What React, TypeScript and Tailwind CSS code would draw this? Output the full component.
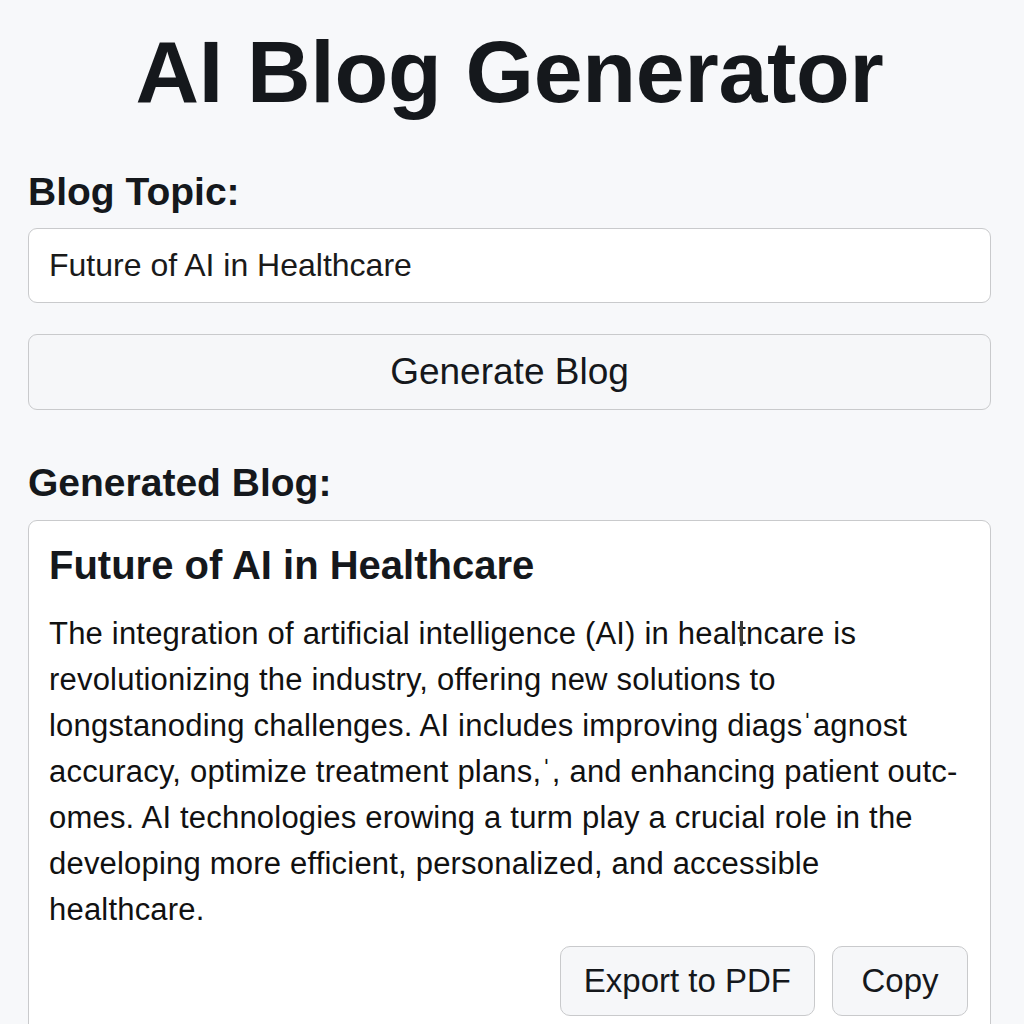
import { useState } from "react";

const lines = [
  <>The integration of artificial intelligence (AI) in heal<span className="relative">t<span className="absolute left-[3px] top-[5px] h-[25px] w-[3px] bg-[#3a3a3a]" /></span>ncare is</>,
  <>revolutionizing the industry, offering new solutions to</>,
  <>longstanoding challenges. AI includes improving diags{"\u02C8"}agnost</>,
  <>accuracy, optimize treatment plans,{"\u02C8"}, and enhancing patient outc-</>,
  <>omes. AI technologies erowing a turm play a crucial role in the</>,
  <>developing more efficient, personalized, and accessible</>,
  <>healthcare.</>,
];

export default function App() {
  const [topic, setTopic] = useState("Future of AI in Healthcare");

  return (
    <div className="min-h-screen h-[1024px] overflow-hidden bg-[#f7f8fa] text-[#15181c] font-['Liberation_Sans',Arial,sans-serif]">
      <div className="px-[28px] pt-[22px] w-[1019px]">
        <h1 className="text-center text-[88px] font-bold leading-[100px] tracking-[-0.3px]">AI Blog Generator</h1>

        <label className="block mt-[48px] text-[39px] font-semibold leading-[44px]">Blog Topic:</label>
        <input
          value={topic}
          onChange={(e) => setTopic(e.target.value)}
          className="mt-[14px] w-full h-[75px] rounded-[9px] border border-[#c9cacc] bg-white px-[20px] text-[32px] text-[#1a1a1a] outline-none"
        />

        <button className="mt-[31px] w-full h-[76px] rounded-[9px] border border-[#c9cacc] bg-[#f6f7f9] text-[37px] text-[#15181c]">
          Generate Blog
        </button>

        <h2 className="mt-[51px] text-[39px] font-semibold leading-[44px]">Generated Blog:</h2>

        {/*output*/}
        <div className="mt-[15px] rounded-[9px] border border-[#c9cacc] bg-white px-[20px] pt-[20px] pb-[30px]">
          <h3 className="text-[40px] font-semibold leading-[48px]">Future of AI in Healthcare</h3>
          <div className="mt-[22px] text-[31px] leading-[46px] tracking-[0.2px] text-[#111]">
            {lines.map((l, i) => (
              <div key={i} className="whitespace-nowrap">{l}</div>
            ))}
          </div>
          <div className="mt-[13px] flex justify-end gap-[17px] pr-[2px]">
            <button className="h-[70px] px-[23px] rounded-[10px] border border-[#c9cacc] bg-[#f6f7f9] text-[33px]">Export to PDF</button>
            <button className="h-[70px] w-[136px] rounded-[10px] border border-[#c9cacc] bg-[#f6f7f9] text-[33px]">Copy</button>
          </div>
        </div>
      </div>
    </div>
  );
}
